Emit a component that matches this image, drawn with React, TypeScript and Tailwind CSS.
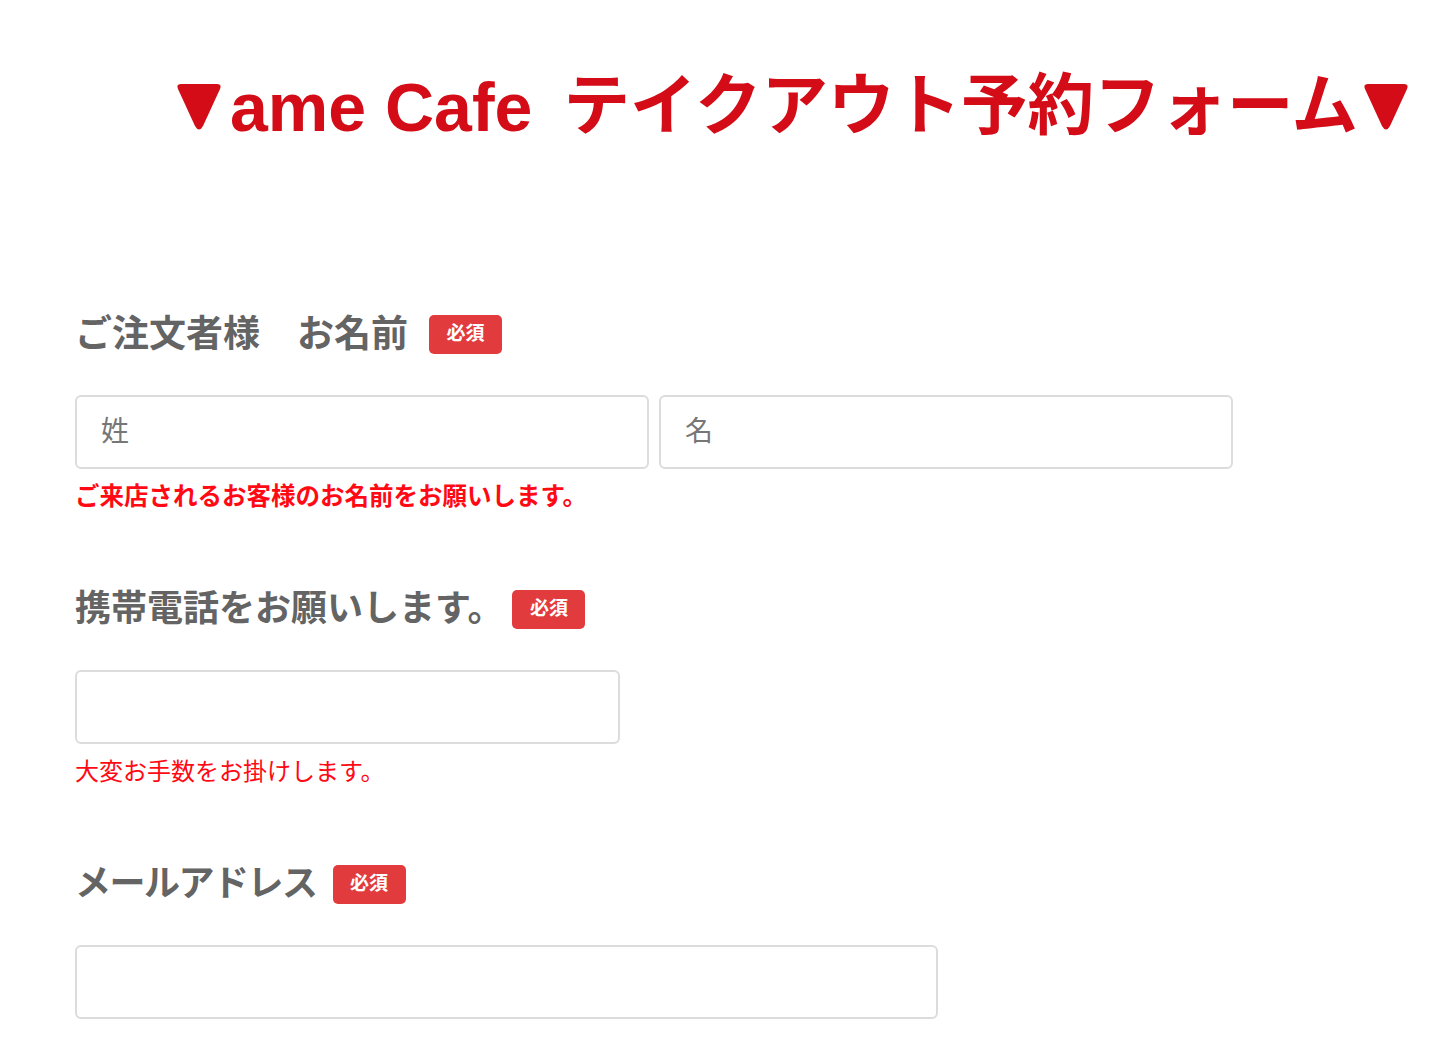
const FONT = { fontFamily: '"Liberation Sans", "Noto Sans CJK JP", sans-serif' };

function Marker() {
  return (
    <svg width="46" height="48" viewBox="0 0 46 48" className="shrink-0" aria-hidden>
      <path
        d="M5 1 H41 Q46 1 44 6 L27 43 Q23 50 19 43 L2 6 Q0 1 5 1 Z"
        fill="#d30c17"
      />
    </svg>
  );
}

function Badge() {
  return (
    <span className="inline-flex h-[39px] w-[73px] shrink-0 items-center justify-center rounded-[5px] bg-[#e23b3d] text-[19px] font-bold text-white">
      必須
    </span>
  );
}

function Label({ text, size, gap, track }: { text: string; size: string; gap: string; track?: string }) {
  return (
    <div className={`flex h-[40px] items-center ${gap}`}>
      <span className={`whitespace-pre font-bold leading-none text-[#646464] ${size} ${track ?? ""}`}>{text}</span>
      <Badge />
    </div>
  );
}

function Field({ w, placeholder }: { w: string; placeholder?: string }) {
  return (
    <input
      type="text"
      placeholder={placeholder}
      className={`${w} h-[74px] rounded-md border-2 border-[#dcdcdc] bg-white px-[24px] text-[28px] text-[#333] outline-none placeholder:text-[#777777]`}
      style={FONT}
    />
  );
}

export default function App() {
  return (
    <div className="min-h-screen bg-white px-[75px] pt-[68px]" style={FONT}>
      <h1 className="flex h-[77px] items-center whitespace-nowrap pl-[101px] font-bold text-[#d30c17]">
        <Marker />
        <span className="ml-[8px] text-[68px] leading-none">ame Cafe</span>
        <span className="ml-[31px] text-[66.5px] leading-none">テイクアウト予約フォーム</span>
        <span className="ml-[5px]">
          <Marker />
        </span>
      </h1>

      <div className="mt-[169px]">
        <Label text="ご注文者様　お名前" size="text-[37px]" gap="gap-[21px]" />
        <div className="mt-[41px] flex gap-[10px]">
          <Field w="w-[574px]" placeholder="姓" />
          <Field w="w-[574px]" placeholder="名" />
        </div>
        <p className="mt-[10px] text-[24.5px] font-bold leading-[36px] text-[#ff0a14]">
          ご来店されるお客様のお名前をお願いします。
        </p>
      </div>

      <div className="mt-[74px]">
        <Label text="携帯電話をお願いします。" size="text-[36px]" gap="gap-[9px]" />
        <div className="mt-[41px]">
          <Field w="w-[545px]" />
        </div>
        <p className="mt-[10px] text-[24px] leading-[36px] text-[#ff0a14]">大変お手数をお掛けします。</p>
      </div>

      <div className="mt-[74px]">
        <Label text="メールアドレス" size="text-[36px]" gap="gap-[16px]" track="tracking-[-1.5px]" />
        <div className="mt-[41px]">
          <Field w="w-[863px]" />
        </div>
      </div>
    </div>
  );
}
